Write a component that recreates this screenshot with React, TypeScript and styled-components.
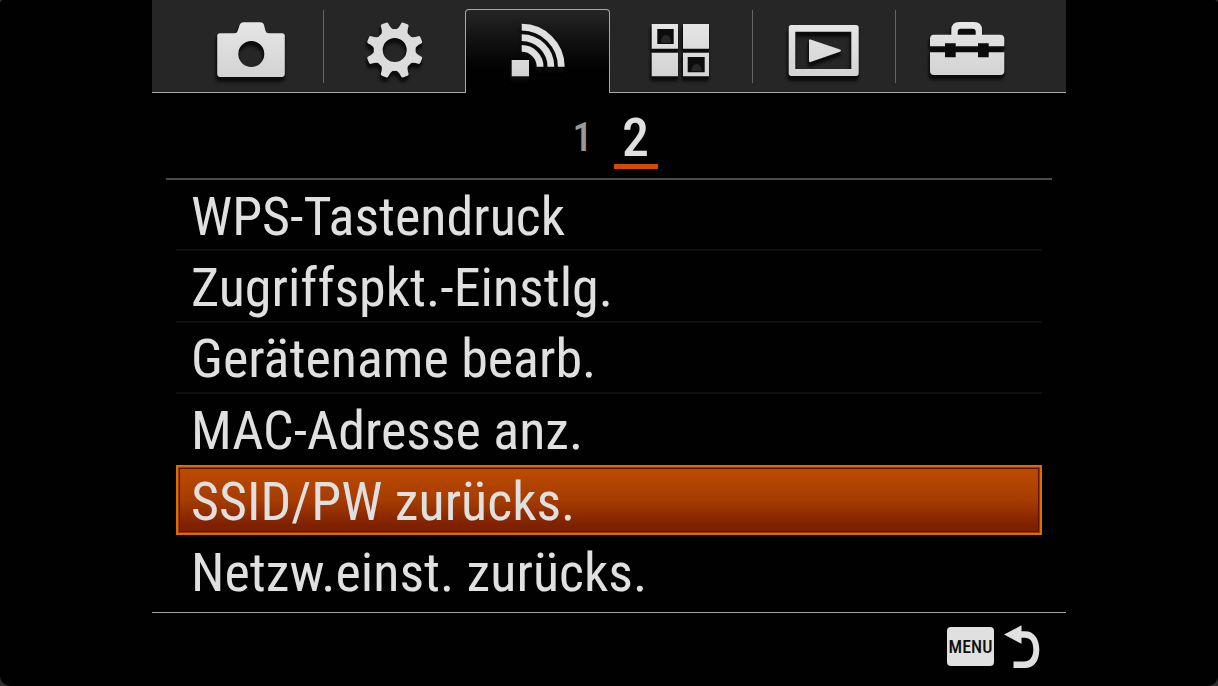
import React, { useState } from 'react';
import styled, { createGlobalStyle, css } from 'styled-components';

const GlobalStyle = createGlobalStyle`
  * { box-sizing: border-box; }
  body { margin: 0; background: #303030; }
  button { font: inherit; color: inherit; background: none; border: 0; padding: 0; margin: 0; }
`;

const Screen = styled.main`
  display: flex;
  flex-direction: column;
  min-height: 100vh;
  padding: 0 152px;
  border-radius: 4px 4px 10px 10px;
  background: #010101;
  color: #e0e0e0;
  font-family: 'Roboto Condensed', 'Liberation Sans Narrow', 'Liberation Sans', sans-serif;
`;

const TabBar = styled.nav`
  display: flex;
  height: 93px;
  background: #262626;
`;

const TabBarEnd = styled.span`
  flex: 0 0 28px;
  border-bottom: 1px solid #a8a8a8;
`;

const Tab = styled.button<{ $active: boolean; $divided: boolean }>`
  display: flex;
  flex: 1 1 0;
  align-items: flex-start;
  justify-content: center;
  padding-top: 14px;
  border-bottom: 1px solid #a8a8a8;
  background: ${p => (p.$divided ? 'linear-gradient(#666, #666) left 10px / 1px 73px no-repeat' : 'none')};
  ${p =>
    p.$active &&
    css`
      margin: 9px -1px 0;
      padding-top: 4px;
      border: 1px solid #a8a8a8;
      border-bottom: 0;
      border-radius: 4px 4px 0 0;
      background: linear-gradient(#262626 0, #151515 24px, #010101 60px);
    `}
`;

const TabIcon = styled.svg`
  display: block;
  width: 89px;
  height: 72px;
  filter: drop-shadow(-1px 2px 1px #0c0c0c) drop-shadow(0 3px 1px #0c0c0c);
`;

const Pager = styled.nav`
  display: flex;
  justify-content: center;
  gap: 9px;
  height: 87px;
  margin: 0 14px;
  padding-top: 16px;
  border-bottom: 2px solid #4c4c4c;
`;

const PageButton = styled.button<{ $current: boolean }>`
  width: 44px;
  height: 60px;
  border-bottom: 5px solid ${p => (p.$current ? '#d44a00' : 'transparent')};
  color: ${p => (p.$current ? '#e0e0e0' : '#9a9a9a')};
  font-size: ${p => (p.$current ? 54 : 40)}px;
  font-weight: 500;
  line-height: 58px;
`;

const Menu = styled.ul`
  display: grid;
  flex: 1;
  grid-template-rows: repeat(6, 1fr);
  margin: 0 24px;
  padding: 0 0 4px;
  list-style: none;
`;

const MenuItem = styled.li<{ $line: boolean }>`
  display: flex;
  border-bottom: 2px solid ${p => (p.$line ? '#0f0f0f' : 'transparent')};
`;

const MenuButton = styled.button<{ $selected: boolean }>`
  flex: 1;
  padding: 4px 13px 0;
  border: 2px solid ${p => (p.$selected ? '#d87000' : 'transparent')};
  background: ${p => (p.$selected ? 'linear-gradient(#bd4c00, #a63c00 50%, #7e2100 88%)' : 'none')};
  box-shadow: ${p => (p.$selected ? 'inset 0 0 0 1px #a03800, inset 0 0 0 2px #5c1200' : 'none')};
  font-size: 54px;
  line-height: 60px;
  text-align: left;
  white-space: nowrap;
`;

const Footer = styled.footer`
  display: flex;
  align-items: flex-start;
  justify-content: flex-end;
  height: 74px;
  padding: 11px 26px 0 0;
  border-top: 1px solid #a0a0a0;
`;

const BackButton = styled.button`
  display: flex;
  align-items: center;
  gap: 10px;
`;

const MenuKey = styled.span`
  width: 47px;
  height: 39px;
  border-radius: 4px;
  background: #e0e0e0;
  color: #101010;
  font-size: 18px;
  font-weight: 500;
  line-height: 39px;
  text-align: center;
`;

const BackArrow = styled.svg`
  display: block;
  width: 36px;
  height: 44px;
`;

const TOOTH_ANGLES = [22, 68, 112, 158, 202, 248, 292, 338];

const tabs = [
  {
    label: 'Kamera',
    x: 207,
    art: (
      <path
        fillRule="evenodd"
        d="M220 33.3h14.5q2.6 0 3.2-2.5l1.9-5.8q.9-2.8 3.6-2.8h17.3q2.7 0 3.5 2.8l1.5 5.8q.7 2.5 3.2 2.5H282q2.8 0 2.8 2.8v38q0 2.8-2.8 2.8H220q-2.8 0-2.8-2.8v-38q0-2.8 2.8-2.8zM251.3 41a13 13 0 1 0 0 26 13 13 0 0 0 0-26z"
      />
    ),
  },
  {
    label: 'Einstellungen',
    x: 350,
    art: (
      <g transform="translate(394.7 50)">
        <circle r="16.5" fill="none" stroke="#dcdcdc" strokeWidth="9" />
        {TOOTH_ANGLES.map(a => (
          <path key={a} transform={`rotate(${a})`} d="M-7-19Q-4.400-21-4-27q.2-1.600 1.800-1.600h4.400q1.600 0 1.800 1.600Q4.400-21 7-19z" fill="#dcdcdc" />
        ))}
      </g>
    ),
  },
  {
    label: 'Drahtlos',
    x: 493,
    art: (
      <>
        <path d="M511.7 60H529v16.3h-17.3z" />
        <path
          fill="none"
          stroke="#e0e0e0"
          strokeWidth="6.8"
          d="M521.7 27.2A39.6 39.6 0 0 1 561.3 66.8M521.7 37.6A29.2 29.2 0 0 1 550.9 66.8M521.7 48.4A18.4 18.4 0 0 1 540.1 66.8"
        />
      </>
    ),
  },
  {
    label: 'Applikation',
    x: 636,
    art: (
      <>
        <path fill="#0c0c0c" d="M656 28h19v18h-19zM686 56h20v18h-20z" />
        <path
          fillRule="evenodd"
          d="M651.7 24H678v24.7h-26.3zM657.3 29v15h16.4V29zM683 24h26v24.7h-26zM651.7 52.7H678v23.6h-26.3zM683 52.7h26v23.6h-26zM687.7 57v15.3h17V57z"
        />
        <path fill="#262626" d="M661 43q0-8 5-8t5 8zM691.500 71q0-7 5-7t5 7z" />
      </>
    ),
  },
  {
    label: 'Wiedergabe',
    x: 779,
    art: (
      <path
        fillRule="evenodd"
        d="M791.5 25H856q2.7 0 2.7 2.7v45.6q0 2.7-2.7 2.7h-64.5q-2.8 0-2.8-2.7V27.7q0-2.7 2.8-2.7zM795.3 31.7V69h56V31.7zM809 40.5q0-1.5 1.5-1l29.5 10q2 1 0 2.2L810.5 62q-1.5.5-1.5-1z"
      />
    ),
  },
  {
    label: 'Setup',
    x: 922,
    art: (
      <>
        <path fill="#0c0c0c" d="M932 44h70v12h-70zM957 28h19v7h-19z" />
        <path
          fillRule="evenodd"
          d="M934 34.7H951.3V30q0-8 8-8H974q8 0 8 8v4.7h18q4.3 0 4.3 4.3v7.3H988.7v-3H978v3H955.7v-3H945v3h-15V39q0-4.3 4-4.3zM957.7 34.7h18v-3q0-3-3-3h-12q-3 0-3 3zM930 52.3h15v5h10.7v-5H978v5h10.7v-5h15.6V71q0 4-4 4H934q-4 0-4-4z"
        />
      </>
    ),
  },
];

const items = [
  'WPS-Tastendruck',
  'Zugriffspkt.-Einstlg.',
  'Gerätename bearb.',
  'MAC-Adresse anz.',
  'SSID/PW zurücks.',
  'Netzw.einst. zurücks.',
];

export default function App() {
  const [tab, setTab] = useState(2);
  const [page, setPage] = useState(2);
  const [selected, setSelected] = useState(4);

  return (
    <>
      <GlobalStyle />
      <Screen>
        <TabBar>
          <TabBarEnd />
          {tabs.map((t, i) => (
            <Tab
              key={t.label}
              type="button"
              aria-label={t.label}
              aria-pressed={i === tab}
              $active={i === tab}
              $divided={i > 0 && i - 1 !== tab}
              onClick={() => setTab(i)}
            >
              <TabIcon viewBox={`${t.x} 14 89 72`} fill="url(#metal)" aria-hidden="true">
                <defs>
                  <linearGradient id="metal" gradientUnits="userSpaceOnUse" x1="0" y1="22" x2="0" y2="78">
                    <stop offset="0" stopColor="#e6e6e6" />
                    <stop offset="1" stopColor="#d2d2d2" />
                  </linearGradient>
                </defs>
                {t.art}
              </TabIcon>
            </Tab>
          ))}
          <TabBarEnd />
        </TabBar>
        <Pager>
          {[1, 2].map(n => (
            <PageButton key={n} type="button" $current={n === page} onClick={() => setPage(n)}>
              {n}
            </PageButton>
          ))}
        </Pager>
        <Menu>
          {items.map((item, i) => (
            <MenuItem key={item} $line={i < 3}>
              <MenuButton type="button" $selected={i === selected} onClick={() => setSelected(i)}>
                {item}
              </MenuButton>
            </MenuItem>
          ))}
        </Menu>
        <Footer>
          <BackButton type="button">
            <MenuKey>MENU</MenuKey>
            <BackArrow viewBox="1004 624 36 44" fill="#e0e0e0" aria-hidden="true">
              <path d="M1004 634.5L1021.5 625.3V631.3H1025C1034 631.3 1039.3 639 1039.3 649.5C1039.3 661 1034 668 1025 668H1013.5V661.5H1024C1030 661.5 1033.3 657 1033.3 649.5C1033.3 641.5 1030 637.8 1024.500 637.8H1021.5V643.8Z" />
            </BackArrow>
          </BackButton>
        </Footer>
      </Screen>
    </>
  );
}
